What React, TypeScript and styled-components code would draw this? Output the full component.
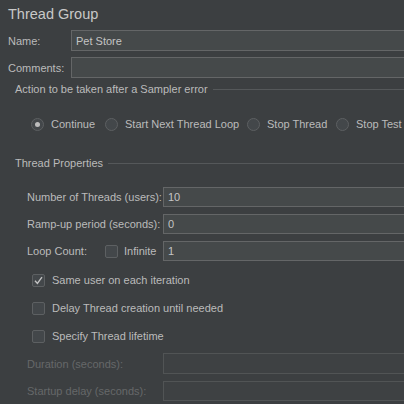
import React from 'react'
import styled, { createGlobalStyle } from 'styled-components'

const GlobalStyle = createGlobalStyle`
  html, body {
    margin: 0;
    padding: 0;
    background: #3c3f41;
  }
  * {
    box-sizing: border-box;
  }
`

const Panel = styled.div`
  width: 404px;
  height: 404px;
  overflow: hidden;
  background: #3c3f41;
  color: #bbbbbb;
  font-family: 'Liberation Sans', Arial, sans-serif;
  font-size: 11px;
  padding: 5px 0 0 8px;
`

const Title = styled.div`
  font-size: 14.5px;
  color: #c8c8c8;
  height: 19px;
  line-height: 19px;
  margin-bottom: 6px;
`

const Row = styled.div<{ $top?: number; $indent?: number }>`
  display: flex;
  align-items: center;
  margin-top: ${(p) => p.$top ?? 0}px;
  padding-left: ${(p) => p.$indent ?? 0}px;
`

const Label = styled.div<{ $width: number; $disabled?: boolean }>`
  width: ${(p) => p.$width}px;
  flex-shrink: 0;
  color: ${(p) => (p.$disabled ? '#666869' : '#bbbbbb')};
  white-space: nowrap;
`

const Field = styled.div<{ $height?: number; $disabled?: boolean }>`
  flex: 1;
  height: ${(p) => p.$height ?? 21}px;
  background: ${(p) => (p.$disabled ? '#3e4143' : '#45494a')};
  border: 1px solid ${(p) => (p.$disabled ? '#515455' : '#646667')};
  border-right: none;
  display: flex;
  align-items: center;
  padding-left: 4px;
  color: #c4c4c4;
`

const Section = styled.div<{ $top: number }>`
  display: flex;
  align-items: center;
  gap: 5px;
  margin-top: ${(p) => p.$top}px;
  padding-left: 7px;
  height: 14px;
`

const SectionLine = styled.div`
  flex: 1;
  height: 1px;
  background: #55585a;
`

const RadioRow = styled.div`
  display: flex;
  align-items: center;
  margin-top: 20px;
  padding-left: 23px;
  height: 16px;
`

const RadioItem = styled.div<{ $width: number }>`
  display: flex;
  align-items: center;
  gap: 7px;
  width: ${(p) => p.$width}px;
  flex-shrink: 0;
  white-space: nowrap;
`

const RadioCircle = styled.div<{ $on?: boolean }>`
  width: 13px;
  height: 13px;
  border-radius: 50%;
  border: 1px solid #5d6062;
  background: #43474a;
  display: flex;
  align-items: center;
  justify-content: center;
  &::after {
    content: '';
    display: ${(p) => (p.$on ? 'block' : 'none')};
    width: 5px;
    height: 5px;
    border-radius: 50%;
    background: #bdbdbd;
  }
`

const CheckRow = styled.div<{ $top: number }>`
  display: flex;
  align-items: center;
  gap: 7px;
  margin-top: ${(p) => p.$top}px;
  padding-left: 24px;
  height: 14px;
`

const Box = styled.div`
  width: 13px;
  height: 13px;
  border-radius: 2px;
  border: 1px solid #5d6062;
  background: #43474a;
  display: flex;
  align-items: center;
  justify-content: center;
  flex-shrink: 0;
`

const Check = () => (
  <svg width="11" height="11" viewBox="0 0 11 11">
    <path d="M2 5.8 L4.4 8.4 L9 2.2" fill="none" stroke="#c4c4c4" strokeWidth="1.4" />
  </svg>
)

const LoopInline = styled.div`
  display: flex;
  align-items: center;
  gap: 6px;
  width: 58px;
  flex-shrink: 0;
  white-space: nowrap;
`

export default function App() {
  return (
    <Panel>
      <GlobalStyle />
      <Title>Thread Group</Title>
      <Row>
        <Label $width={63}>Name:</Label>
        <Field>Pet Store</Field>
      </Row>
      <Row $top={6}>
        <Label $width={63}>Comments:</Label>
        <Field />
      </Row>
      <Section $top={4}>
        <span>Action to be taken after a Sampler error</span>
        <SectionLine />
      </Section>
      <RadioRow>
        <RadioItem $width={74}>
          <RadioCircle $on />
          Continue
        </RadioItem>
        <RadioItem $width={142}>
          <RadioCircle />
          Start Next Thread Loop
        </RadioItem>
        <RadioItem $width={89}>
          <RadioCircle />
          Stop Thread
        </RadioItem>
        <RadioItem $width={70}>
          <RadioCircle />
          Stop Test
        </RadioItem>
      </RadioRow>
      <Section $top={24}>
        <span>Thread Properties</span>
        <SectionLine />
      </Section>
      <Row $top={17} $indent={19}>
        <Label $width={136}>Number of Threads (users):</Label>
        <Field $height={20}>10</Field>
      </Row>
      <Row $top={7} $indent={19}>
        <Label $width={136}>Ramp-up period (seconds):</Label>
        <Field $height={20}>0</Field>
      </Row>
      <Row $top={7} $indent={19}>
        <Label $width={78}>Loop Count:</Label>
        <LoopInline>
          <Box />
          Infinite
        </LoopInline>
        <Field $height={20}>1</Field>
      </Row>
      <CheckRow $top={12}>
        <Box>
          <Check />
        </Box>
        Same user on each iteration
      </CheckRow>
      <CheckRow $top={14}>
        <Box />
        Delay Thread creation until needed
      </CheckRow>
      <CheckRow $top={14}>
        <Box />
        Specify Thread lifetime
      </CheckRow>
      <Row $top={10} $indent={19}>
        <Label $width={136} $disabled>
          Duration (seconds):
        </Label>
        <Field $disabled />
      </Row>
      <Row $top={7} $indent={19}>
        <Label $width={136} $disabled>
          Startup delay (seconds):
        </Label>
        <Field $height={20} $disabled />
      </Row>
    </Panel>
  )
}
